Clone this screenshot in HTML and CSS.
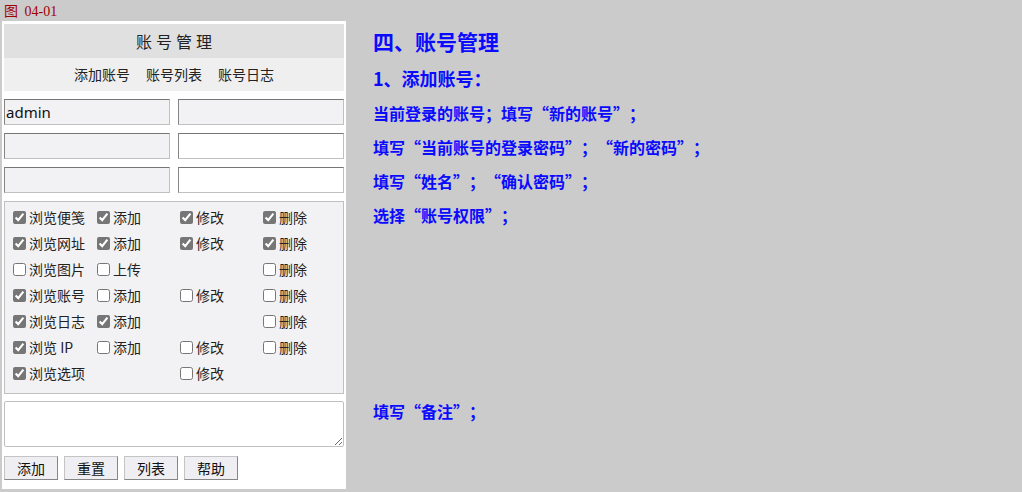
FILE: index.html
```html
<!DOCTYPE html>
<html lang="zh-CN">
<head>
    <meta charset="UTF-8">
    <title>账号管理</title>
    <link rel="stylesheet" href="styles.css">
</head>
<body>
    <div class="caption">图 04-01</div>

    <div class="page">
        <div class="panel">
            <div class="panel-title">账号管理</div>
            <div class="panel-nav">
                <a href="#">添加账号</a>
                <a href="#">账号列表</a>
                <a href="#">账号日志</a>
            </div>

            <div class="form-grid">
                <input type="text" class="readonly" value="admin" readonly>
                <input type="text" class="readonly" readonly>
                <input type="password" class="readonly" readonly>
                <input type="password">
                <input type="text" class="readonly" readonly>
                <input type="password">
            </div>

            <div class="rights">
                <label><input type="checkbox" checked>浏览便笺</label>
                <label><input type="checkbox" checked>添加</label>
                <label><input type="checkbox" checked>修改</label>
                <label><input type="checkbox" checked>删除</label>

                <label><input type="checkbox" checked>浏览网址</label>
                <label><input type="checkbox" checked>添加</label>
                <label><input type="checkbox" checked>修改</label>
                <label><input type="checkbox" checked>删除</label>

                <label><input type="checkbox">浏览图片</label>
                <label><input type="checkbox">上传</label>
                <span></span>
                <label><input type="checkbox">删除</label>

                <label><input type="checkbox" checked>浏览账号</label>
                <label><input type="checkbox">添加</label>
                <label><input type="checkbox">修改</label>
                <label><input type="checkbox">删除</label>

                <label><input type="checkbox" checked>浏览日志</label>
                <label><input type="checkbox" checked>添加</label>
                <span></span>
                <label><input type="checkbox">删除</label>

                <label><input type="checkbox" checked>浏览 IP</label>
                <label><input type="checkbox">添加</label>
                <label><input type="checkbox">修改</label>
                <label><input type="checkbox">删除</label>

                <label><input type="checkbox" checked>浏览选项</label>
                <span></span>
                <label><input type="checkbox">修改</label>
                <span></span>
            </div>

            <textarea class="remark"></textarea>

            <div class="buttons">
                <button>添加</button>
                <button>重置</button>
                <button>列表</button>
                <button>帮助</button>
            </div>
        </div>

        <div class="notes">
            <h2>四、账号管理</h2>
            <h3>1、添加账号：</h3>
            <p>当前登录的账号；填写“新的账号”；</p>
            <p>填写“当前账号的登录密码”；“新的密码”；</p>
            <p>填写“姓名”；“确认密码”；</p>
            <p>选择“账号权限”；</p>
            <p class="note-remark">填写“备注”；</p>
        </div>
    </div>
</body>
</html>
```

FILE: styles.css
```css
body {
    margin: 0;
    background: #cbcbcb;
    font-family: "Noto Sans", "Noto Sans CJK SC", sans-serif;
    color: #222;
}

.caption {
    height: 21px;
    padding-left: 4px;
    font-family: "Liberation Serif", "Noto Sans CJK SC", serif;
    font-size: 14px;
    line-height: 23px;
    word-spacing: 3px;
    color: #a00000;
}

.page {
    display: flex;
    padding-left: 2px;
}

/* left panel */
.panel {
    width: 344px;
    height: 468px;
    box-sizing: border-box;
    padding: 3px 2px;
    background: #fff;
}

.panel-title {
    height: 34px;
    background: #e0e0e0;
    font-family: "Noto Sans CJK SC", sans-serif;
    font-size: 16px;
    line-height: 34px;
    letter-spacing: 4px;
    text-indent: 4px;
    text-align: center;
}

.panel-nav {
    height: 33px;
    background: #efefef;
    display: flex;
    justify-content: center;
    gap: 16px;
    font-family: "Noto Sans CJK SC", sans-serif;
    font-size: 14px;
    line-height: 33px;
}

.panel-nav a {
    color: #222;
    text-decoration: none;
}

.form-grid {
    display: grid;
    grid-template-columns: 166px 166px;
    gap: 8px;
    margin-top: 8px;
}

.form-grid input {
    height: 26px;
    box-sizing: border-box;
    margin: 0;
    padding: 0 1px;
    border: 1px solid;
    border-color: #767676 #c0c0c0 #c0c0c0 #858585;
    background: #fff;
    font-family: "Noto Sans", sans-serif;
    font-size: 15px;
    color: #111;
    outline: none;
}

.form-grid input.readonly {
    background: #f2f2f4;
}

/* rights checkboxes */
.rights {
    display: grid;
    grid-template-columns: 84px 83px 83px 83px;
    grid-auto-rows: 26px;
    height: 193px;
    box-sizing: border-box;
    margin-top: 8px;
    padding: 2px 4px 6px;
    border: 1px solid #c0c0c0;
    background: #f2f2f4;
    font-family: "Noto Sans CJK SC", sans-serif;
    font-size: 14px;
}

.rights label {
    display: flex;
    align-items: center;
    white-space: nowrap;
}

.rights input {
    width: 13px;
    height: 13px;
    margin: 0 3px 0 4px;
    accent-color: #767676;
}

.remark {
    display: block;
    width: 340px;
    height: 46px;
    box-sizing: border-box;
    margin: 7px 0 0;
    border: 1px solid #c0c0c0;
    border-radius: 2px;
    background: #fff;
}

.buttons {
    display: flex;
    gap: 6px;
    margin-top: 9px;
}

.buttons button {
    width: 54px;
    height: 24px;
    padding: 0;
    border: 1px solid;
    border-color: #c4c4c4 #858585 #858585 #c4c4c4;
    background: #efeef3;
    font-family: "Noto Sans CJK SC", sans-serif;
    font-size: 14px;
    color: #111;
}

/* notes column */
.notes {
    margin-left: 27px;
    color: #0a0aff;
    font-family: "Noto Sans CJK SC", sans-serif;
    font-weight: bold;
    text-spacing-trim: space-all;
}

.notes h2 {
    margin: 8px 0 0;
    font-size: 21px;
    line-height: 24px;
}

.notes h3 {
    margin: 13px 0 0;
    font-size: 18px;
    line-height: 24px;
}

.notes p {
    margin: 12px 0 0;
    font-size: 16px;
    line-height: 22px;
}

.notes p.note-remark {
    margin-top: 174px;
}
```
